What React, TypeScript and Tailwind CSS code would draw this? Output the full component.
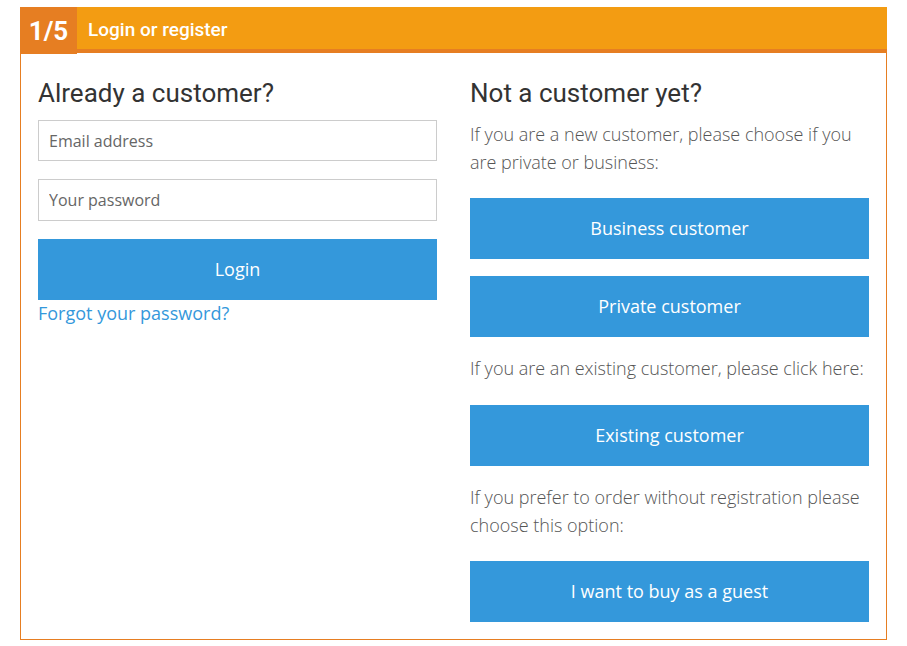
import React from "react";

const roboto = { fontFamily: "Roboto, 'Liberation Sans', sans-serif" };

const BlueButton: React.FC<{ label: string; className?: string }> = ({ label, className }) => (
  <button
    className={
      "flex h-[61px] w-full items-center justify-center bg-[#3498db] text-[18px] text-white font-['Open_Sans',sans-serif] " +
      (className ?? "")
    }
  >
    {label}
  </button>
);

const App: React.FC = () => {
  return (
    <div className="min-h-[646px] bg-white pl-[20px] pt-[7px] font-['Open_Sans',sans-serif]">
      <div className="w-[867px]">
        <div className="flex h-[46px] items-start border-b-4 border-[#e67e22] bg-[#f39c12]">
          <div
            className="flex h-[47px] w-[57px] shrink-0 items-center justify-center bg-[#e67e22] pt-[1px] text-[26px] font-bold text-white"
            style={roboto}
          >
            1/5
          </div>
          <div className="flex h-[46px] items-center pl-[11px] text-[19px] font-medium text-white" style={roboto}>
            Login or register
          </div>
        </div>

        <div className="grid h-[587px] grid-cols-2 gap-[33px] border-x border-b border-[#e67e22] px-[17px] pt-[25px]">
          <div className="flex flex-col">
            <h2 className="text-[26px] leading-[30px] text-[#333]" style={roboto}>
              Already a customer?
            </h2>
            <input
              className="mt-[12px] h-[41px] w-full border border-[#ccc] px-[10px] text-[16px] text-[#333] placeholder:text-[#666] outline-none"
              placeholder="Email address"
            />
            <input
              type="password"
              className="mt-[18px] h-[42px] w-full border border-[#ccc] px-[10px] text-[16px] text-[#333] placeholder:text-[#666] outline-none"
              placeholder="Your password"
            />
            <BlueButton label="Login" className="mt-[18px]" />
            <a href="#" className="text-[18px] leading-[26px] text-[#3498db]">
              Forgot your password?
            </a>
          </div>

          <div className="flex flex-col">
            <h2 className="text-[26px] leading-[30px] text-[#333]" style={roboto}>
              Not a customer yet?
            </h2>
            <p className="mt-[12px] text-[18px] font-light leading-[28px] text-[#555]">
              If you are a new customer, please choose if you are private or business:
            </p>
            <BlueButton label="Business customer" className="mt-[22px]" />
            <BlueButton label="Private customer" className="mt-[17px]" />
            <p className="mt-[17px] text-[18px] font-light leading-[28px] text-[#555]">
              If you are an existing customer, please click here:
            </p>
            <BlueButton label="Existing customer" className="mt-[23px]" />
            <p className="mt-[17px] text-[18px] font-light leading-[28px] text-[#555]">
              If you prefer to order without registration please choose this option:
            </p>
            <BlueButton label="I want to buy as a guest" className="mt-[22px]" />
          </div>
        </div>
      </div>
    </div>
  );
};

export default App;
